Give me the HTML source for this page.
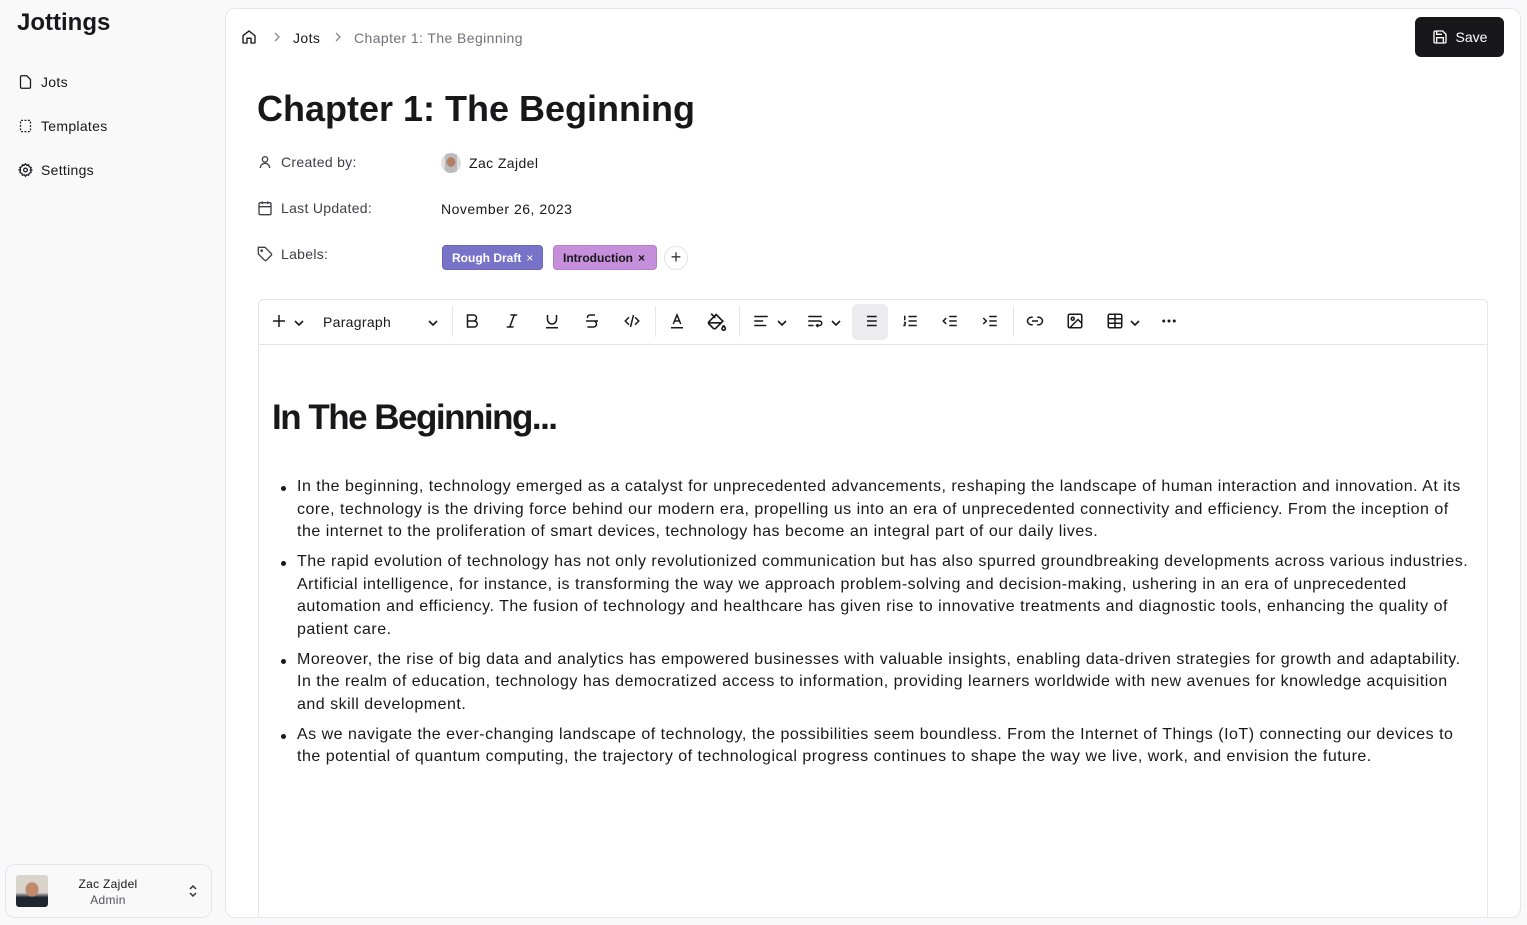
<!DOCTYPE html>
<html><head><meta charset="utf-8"><style>
*{box-sizing:border-box;margin:0;padding:0}
body{width:1527px;height:925px;background:#f9f9fa;font-family:"Liberation Sans",sans-serif;color:#18181b;position:relative;overflow:hidden}
.abs{position:absolute}
svg{display:block}
.nav{position:absolute;left:18px;display:flex;align-items:center;gap:8px;font-size:14px;color:#18181b;letter-spacing:0.3px}
.main{position:absolute;left:225px;top:8px;width:1296px;height:910px;background:#fff;border:1px solid #e4e6ee;border-radius:10px}
.meta{position:absolute;left:257px;display:flex;align-items:center;gap:8px;font-size:14px;color:#3f3f46;letter-spacing:0.3px}
.tag{position:absolute;top:245px;height:25px;border-radius:4px;font-size:12px;font-weight:bold;display:flex;align-items:center;padding:0 9px;gap:5px;white-space:nowrap}
ul{position:absolute;left:297px;top:476px;width:1180px;font-size:16px;line-height:22.5px;color:#18181b;list-style:none;letter-spacing:0.5px}
li{position:relative;margin-bottom:7.5px;white-space:nowrap}
li:before{content:"";position:absolute;left:-16px;top:10px;width:5px;height:5px;border-radius:50%;background:#18181b}
.ic{position:absolute;top:312px}
.chev{position:absolute;top:317px}
</style></head><body>
<div class="abs" style="left:17px;top:9px;font-size:24px;font-weight:bold;letter-spacing:0px">Jottings</div>
<div class="nav" style="top:74px"><svg width="15" height="16" viewBox="0 0 24 24" fill="none" stroke="#18181b" stroke-width="2"><path d="M14 2H6a2 2 0 0 0-2 2v16a2 2 0 0 0 2 2h12a2 2 0 0 0 2-2V8z"/></svg>Jots</div>
<div class="nav" style="top:118px"><svg width="15" height="16" viewBox="0 0 24 24" fill="none" stroke="#18181b" stroke-width="2" stroke-dasharray="3 2.5"><rect x="4" y="3" width="16" height="18" rx="1"/></svg>Templates</div>
<div class="nav" style="top:162px"><svg width="15" height="16" viewBox="0 0 24 24" fill="none" stroke="#18181b" stroke-width="2"><circle cx="12" cy="12" r="3"/><path d="M12 2l2 2.5 3-.8.8 3L21 8l-1 3 2 1-2 1 1 3-3.2 1.3-.8 3-3-.8L12 22l-2-2.5-3 .8-.8-3L3 16l1-3-2-1 2-1-1-3 3.2-1.3.8-3 3 .8z"/></svg>Settings</div>

<div class="abs" style="left:5px;top:864px;width:207px;height:54px;border:1px solid #e4e6ee;border-radius:10px;background:#f9f9fa"></div>
<div class="abs" style="left:16px;top:875px;width:32px;height:32px;border-radius:3px;background:radial-gradient(ellipse at 50% 45%,#c08a6a 0 28%,transparent 30%),linear-gradient(#d8d4cc 0 55%,#1e2430 70%)"></div>
<div class="abs" style="left:60px;top:876px;width:96px;text-align:center;font-size:12px;line-height:16px;letter-spacing:0.3px">Zac Zajdel<br><span style="color:#52525b">Admin</span></div>
<svg class="abs" style="left:187px;top:884px" width="12" height="14" viewBox="0 0 12 14" fill="none" stroke="#333" stroke-width="1.5"><path d="M3 5l3-3 3 3M3 9l3 3 3-3"/></svg>

<div class="main"></div>
<svg class="abs" style="left:241px;top:29px" width="16" height="16" viewBox="0 0 24 24" fill="none" stroke="#18181b" stroke-width="2"><path d="M3 10l9-7 9 7v10a1 1 0 0 1-1 1h-5v-7H9v7H4a1 1 0 0 1-1-1z"/></svg>
<svg class="abs" style="left:273px;top:32px" width="8" height="10" viewBox="0 0 8 10" fill="none" stroke="#888" stroke-width="1.3"><path d="M2 1l4 4-4 4"/></svg>
<div class="abs" style="left:293px;top:30px;font-size:14px;letter-spacing:0.4px">Jots</div>
<svg class="abs" style="left:334px;top:32px" width="8" height="10" viewBox="0 0 8 10" fill="none" stroke="#888" stroke-width="1.3"><path d="M2 1l4 4-4 4"/></svg>
<div class="abs" style="left:354px;top:30px;font-size:14px;color:#71717a;letter-spacing:0.4px">Chapter 1: The Beginning</div>
<div class="abs" style="left:1415px;top:17px;width:89px;height:40px;background:#18181b;border-radius:6px;color:#fff;font-size:14px;display:flex;align-items:center;justify-content:center;gap:8px"><svg width="16" height="16" viewBox="0 0 24 24" fill="none" stroke="#fff" stroke-width="2"><path d="M19 21H5a2 2 0 0 1-2-2V5a2 2 0 0 1 2-2h11l5 5v11a2 2 0 0 1-2 2z"/><path d="M17 21v-8H7v8M7 3v5h8"/></svg>Save</div>

<div class="abs" style="left:257px;top:88px;font-size:36px;font-weight:bold;letter-spacing:0px">Chapter 1: The Beginning</div>
<div class="meta" style="top:154px"><svg width="16" height="16" viewBox="0 0 24 24" fill="none" stroke="#3f3f46" stroke-width="2"><circle cx="12" cy="8" r="4"/><path d="M5 21a7 7 0 0 1 14 0"/></svg>Created by:</div>
<div class="abs" style="left:441px;top:153px;width:20px;height:20px;border-radius:50%;background:radial-gradient(ellipse at 50% 45%,#b58065 0 30%,transparent 32%),linear-gradient(90deg,#ddd 0 20%,#bbb 20% 80%,#ddd 80%)"></div>
<div class="abs" style="left:469px;top:155px;font-size:14px;color:#18181b;letter-spacing:0.4px">Zac Zajdel</div>
<div class="meta" style="top:200px"><svg width="16" height="16" viewBox="0 0 24 24" fill="none" stroke="#3f3f46" stroke-width="2"><rect x="3" y="4" width="18" height="18" rx="2"/><path d="M16 2v4M8 2v4M3 10h18M8 14h.01M12 14h.01M16 14h.01M8 18h.01M12 18h.01M16 18h.01"/></svg>Last Updated:</div>
<div class="abs" style="left:441px;top:201px;font-size:14px;letter-spacing:0.5px">November 26, 2023</div>
<div class="meta" style="top:246px"><svg width="16" height="16" viewBox="0 0 24 24" fill="none" stroke="#3f3f46" stroke-width="2"><path d="M12 2H2v10l9.3 9.3a2 2 0 0 0 2.8 0l7.2-7.2a2 2 0 0 0 0-2.8z"/><circle cx="7" cy="7" r="1"/></svg>Labels:</div>
<div class="tag" style="left:442px;width:101px;background:#7872c9;color:#fff;border:1px solid #6a64bb">Rough Draft <span style="font-weight:normal">×</span></div>
<div class="tag" style="left:553px;width:104px;background:#c58fdc;color:#18181b;border:1px solid #b47fcb">Introduction <span>×</span></div>
<div class="abs" style="left:664px;top:246px;width:24px;height:24px;border-radius:50%;border:1px solid #e4e4e7;text-align:center;line-height:21px;font-size:18px;color:#333">+</div>

<div class="abs" style="left:258px;top:299px;width:1230px;height:619px;border:1px solid #e4e6ee;border-bottom:none;border-radius:6px 6px 0 0"></div>
<div class="abs" style="left:259px;top:344px;width:1228px;height:1px;background:#e4e6ee"></div>
<div class="abs" style="left:852px;top:304px;width:36px;height:36px;background:#ececee;border-radius:5px"></div>
<svg width="0" height="0" style="position:absolute"><defs><path id="cv" d="M2 4l4 4 4-4"/></defs></svg>
<svg class="ic" style="left:270px" width="18" height="18" viewBox="0 0 24 24" fill="none" stroke="#18181b" stroke-width="2"><path d="M12 4v16M4 12h16"/></svg>
<svg class="chev" style="left:293px" width="12" height="12" viewBox="0 0 12 12" fill="none" stroke="#18181b" stroke-width="1.6"><use href="#cv"/></svg>
<div class="abs" style="left:323px;top:314px;font-size:14px;letter-spacing:0.3px">Paragraph</div>
<svg class="chev" style="left:427px" width="12" height="12" viewBox="0 0 12 12" fill="none" stroke="#18181b" stroke-width="1.6"><use href="#cv"/></svg>
<div class="abs" style="left:452px;top:306px;width:1px;height:31px;background:#e4e6ee"></div>
<svg class="ic" style="left:463px" width="18" height="18" viewBox="0 0 24 24" fill="none" stroke="#18181b" stroke-width="2"><path d="M6 4h8a4 4 0 0 1 0 8H6zM6 12h9a4 4 0 0 1 0 8H6z"/></svg>
<svg class="ic" style="left:503px" width="18" height="18" viewBox="0 0 24 24" fill="none" stroke="#18181b" stroke-width="2"><path d="M19 4h-9M14 20H5M15 4L9 20"/></svg>
<svg class="ic" style="left:543px" width="18" height="18" viewBox="0 0 24 24" fill="none" stroke="#18181b" stroke-width="2"><path d="M6 4v6a6 6 0 0 0 12 0V4M4 21h16"/></svg>
<svg class="ic" style="left:583px" width="18" height="18" viewBox="0 0 24 24" fill="none" stroke="#18181b" stroke-width="2"><path d="M16 4H9a3 3 0 0 0-2.8 4M14 12a4 4 0 0 1 0 8H6M4 12h16"/></svg>
<svg class="ic" style="left:622px" width="20" height="18" viewBox="0 0 24 24" fill="none" stroke="#18181b" stroke-width="2"><path d="M8 7l-5 5 5 5M16 7l5 5-5 5M14 4l-4 16"/></svg>
<div class="abs" style="left:655px;top:306px;width:1px;height:31px;background:#e4e6ee"></div>
<svg class="ic" style="left:668px" width="18" height="18" viewBox="0 0 24 24" fill="none" stroke="#18181b" stroke-width="2"><path d="M4 21h16M7 16l5-12 5 12M9 12h6"/></svg>
<svg class="ic" style="left:707px" width="20" height="20" viewBox="0 0 24 24" fill="none" stroke="#18181b" stroke-width="2"><path d="M19 11l-8-8-8.6 8.6a2 2 0 0 0 0 2.8l5.2 5.2a2 2 0 0 0 2.8 0zM5 2l5 5M2 13h15M22 20a2 2 0 1 1-4 0c0-1.6 1.7-2.4 2-4 .3 1.6 2 2.4 2 4z"/></svg>
<div class="abs" style="left:739px;top:306px;width:1px;height:31px;background:#e4e6ee"></div>
<svg class="ic" style="left:752px" width="18" height="18" viewBox="0 0 24 24" fill="none" stroke="#18181b" stroke-width="2"><path d="M3 6h18M3 12h12M3 18h16"/></svg>
<svg class="chev" style="left:776px" width="12" height="12" viewBox="0 0 12 12" fill="none" stroke="#18181b" stroke-width="1.6"><use href="#cv"/></svg>
<svg class="ic" style="left:806px" width="18" height="18" viewBox="0 0 24 24" fill="none" stroke="#18181b" stroke-width="2"><path d="M3 6h18M3 12h15a3 3 0 0 1 0 6h-4M16 16l-2 2 2 2M3 18h7"/></svg>
<svg class="chev" style="left:830px" width="12" height="12" viewBox="0 0 12 12" fill="none" stroke="#18181b" stroke-width="1.6"><use href="#cv"/></svg>
<svg class="ic" style="left:861px" width="18" height="18" viewBox="0 0 24 24" fill="none" stroke="#18181b" stroke-width="2"><path d="M8 6h13M8 12h13M8 18h13M3 6h.01M3 12h.01M3 18h.01"/></svg>
<svg class="ic" style="left:901px" width="18" height="18" viewBox="0 0 24 24" fill="none" stroke="#18181b" stroke-width="2"><path d="M10 6h11M10 12h11M10 18h11M4 6h1v4M4 10h2M6 18H4c0-1 2-2 2-3s-1-1.5-2-1"/></svg>
<svg class="ic" style="left:941px" width="18" height="18" viewBox="0 0 24 24" fill="none" stroke="#18181b" stroke-width="2"><path d="M21 6H11M21 12H11M21 18H11M7 8l-4 4 4 4"/></svg>
<svg class="ic" style="left:981px" width="18" height="18" viewBox="0 0 24 24" fill="none" stroke="#18181b" stroke-width="2"><path d="M21 6H11M21 12H11M21 18H11M3 8l4 4-4 4"/></svg>
<div class="abs" style="left:1013px;top:306px;width:1px;height:31px;background:#e4e6ee"></div>
<svg class="ic" style="left:1026px" width="18" height="18" viewBox="0 0 24 24" fill="none" stroke="#18181b" stroke-width="2"><path d="M9 17H7A5 5 0 0 1 7 7h2M15 7h2a5 5 0 0 1 0 10h-2M8 12h8"/></svg>
<svg class="ic" style="left:1066px" width="18" height="18" viewBox="0 0 24 24" fill="none" stroke="#18181b" stroke-width="2"><rect x="3" y="3" width="18" height="18" rx="2"/><circle cx="9" cy="9" r="2"/><path d="M21 15l-5-5L5 21"/></svg>
<svg class="ic" style="left:1106px" width="18" height="18" viewBox="0 0 24 24" fill="none" stroke="#18181b" stroke-width="2"><rect x="3" y="3" width="18" height="18" rx="2"/><path d="M3 9h18M3 15h18M12 3v18"/></svg>
<svg class="chev" style="left:1129px" width="12" height="12" viewBox="0 0 12 12" fill="none" stroke="#18181b" stroke-width="1.6"><use href="#cv"/></svg>
<svg class="ic" style="left:1160px" width="18" height="18" viewBox="0 0 24 24" fill="#18181b"><circle cx="5" cy="12" r="2"/><circle cx="12" cy="12" r="2"/><circle cx="19" cy="12" r="2"/></svg>

<div class="abs" style="left:272px;top:398px;font-size:35px;font-weight:bold;letter-spacing:-1.5px">In The Beginning...</div>
<ul>
<li>In the beginning, technology emerged as a catalyst for unprecedented advancements, reshaping the landscape of human interaction and innovation. At its<br>core, technology is the driving force behind our modern era, propelling us into an era of unprecedented connectivity and efficiency. From the inception of<br>the internet to the proliferation of smart devices, technology has become an integral part of our daily lives.</li>
<li>The rapid evolution of technology has not only revolutionized communication but has also spurred groundbreaking developments across various industries.<br>Artificial intelligence, for instance, is transforming the way we approach problem-solving and decision-making, ushering in an era of unprecedented<br>automation and efficiency. The fusion of technology and healthcare has given rise to innovative treatments and diagnostic tools, enhancing the quality of<br>patient care.</li>
<li>Moreover, the rise of big data and analytics has empowered businesses with valuable insights, enabling data-driven strategies for growth and adaptability.<br>In the realm of education, technology has democratized access to information, providing learners worldwide with new avenues for knowledge acquisition<br>and skill development.</li>
<li>As we navigate the ever-changing landscape of technology, the possibilities seem boundless. From the Internet of Things (IoT) connecting our devices to<br>the potential of quantum computing, the trajectory of technological progress continues to shape the way we live, work, and envision the future.</li>
</ul>
</body></html>
